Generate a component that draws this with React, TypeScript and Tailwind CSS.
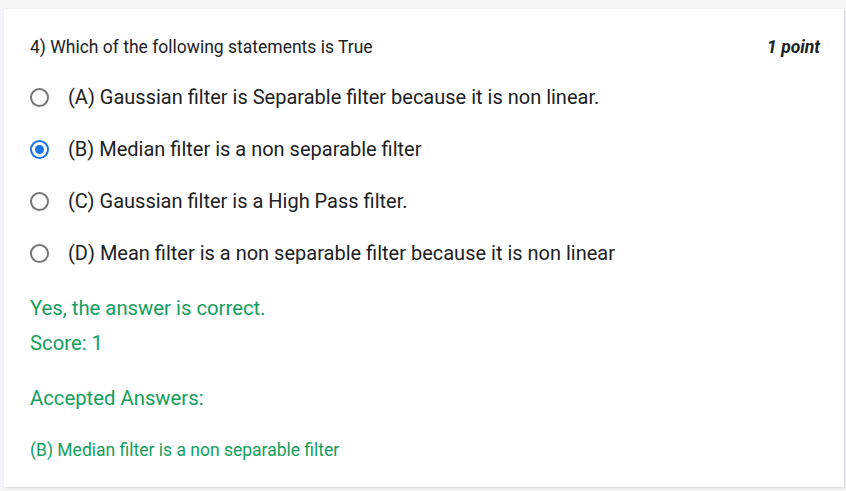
import React from 'react';

const options = [
  { label: '(A) Gaussian filter is Separable filter because it is non linear.', checked: false },
  { label: '(B) Median filter is a non separable filter', checked: true },
  { label: '(C) Gaussian filter is a High Pass filter.', checked: false },
  { label: '(D) Mean filter is a non separable filter because it is non linear', checked: false },
];

const Radio: React.FC<{ checked: boolean }> = ({ checked }) => (
  <span
    className={`flex h-[19px] w-[19px] shrink-0 items-center justify-center rounded-full border-2 ${
      checked ? 'border-[#1a73e8]' : 'border-[#757575]'
    }`}
  >
    {checked && <span className="h-[9px] w-[9px] rounded-full bg-[#1a73e8]" />}
  </span>
);

export default function App() {
  return (
    <div className="min-h-[491px] bg-[#f4f5f8] pt-[9px] pl-[4px] pr-[2px] font-['Roboto',sans-serif]">
      <div className="h-[478px] bg-white shadow-[1px_1px_2px_rgba(60,64,90,0.18)] pl-[26px] pr-[24px] pt-[27px]">
        <div className="flex items-center justify-between text-[17.5px] leading-[22px] text-[#202124]">
          <span>4) Which of the following statements is True</span>
          <span className="font-bold italic">1 point</span>
        </div>

        <div className="mt-[13px] flex flex-col">
          {options.map((opt) => (
            <div key={opt.label} className="flex h-[52px] items-center gap-[19px] text-[20px] text-[#202124]">
              <Radio checked={opt.checked} />
              <span>{opt.label}</span>
            </div>
          ))}
        </div>

        <div className="mt-[17px] text-[20.3px] leading-[24px] text-[#12a05c]">
          <p>Yes, the answer is correct.</p>
          <p className="mt-[11px]">Score: 1</p>
          <p className="mt-[31px]">Accepted Answers:</p>
          <p className="mt-[30px] text-[17.5px] leading-[20px]">(B) Median filter is a non separable filter</p>
        </div>
      </div>
    </div>
  );
}
